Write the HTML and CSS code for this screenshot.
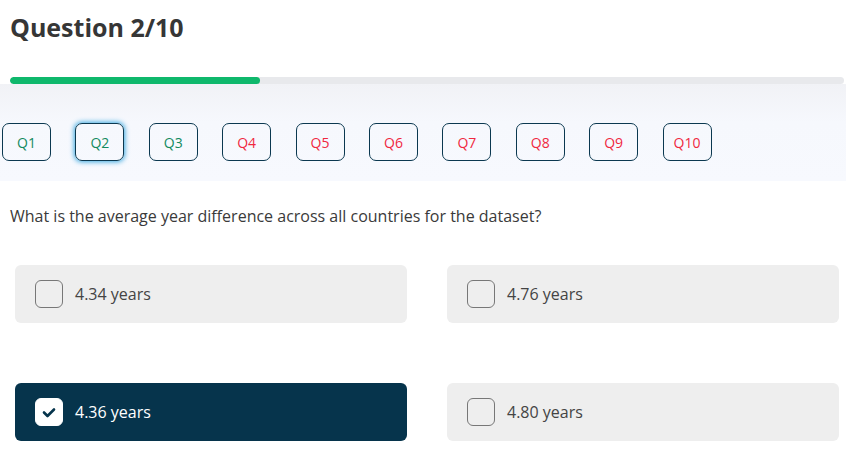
FILE: index.html
```html
<!DOCTYPE html>
<html lang="en">
<head>
<meta charset="utf-8">
<title>Quiz</title>
<link rel="stylesheet" href="styles.css">
</head>
<body>
<div class="page">
  <header class="head">
    <h1 class="title">Question 2/10</h1>
    <div class="progress"><div class="progress-fill" style="width: 250px"></div></div>
  </header>
  <nav class="qnav">
    <button class="qbtn done">Q1</button>
    <button class="qbtn done current">Q2</button>
    <button class="qbtn done">Q3</button>
    <button class="qbtn todo">Q4</button>
    <button class="qbtn todo">Q5</button>
    <button class="qbtn todo">Q6</button>
    <button class="qbtn todo">Q7</button>
    <button class="qbtn todo">Q8</button>
    <button class="qbtn todo">Q9</button>
    <button class="qbtn todo">Q10</button>
  </nav>
  <p class="question">What is the average year difference across all countries for the dataset?</p>
  <div class="options">
    <div class="option"><span class="box"></span><span class="label">4.34 years</span></div>
    <div class="option"><span class="box"></span><span class="label">4.76 years</span></div>
    <div class="option selected"><span class="box"><svg width="14" height="11" viewBox="0 0 14 11"><path d="M2 5.5 L5.5 9 L12 2.5" fill="none" stroke="#06344c" stroke-width="2.6" stroke-linecap="round" stroke-linejoin="round"/></svg></span><span class="label">4.36 years</span></div>
    <div class="option"><span class="box"></span><span class="label">4.80 years</span></div>
  </div>
</div>
</body>
</html>
```

FILE: styles.css
```css
* { box-sizing: border-box; }
html, body { margin: 0; padding: 0; background: #ffffff; }
body { font-family: "Open Sans", "Liberation Sans", sans-serif; color: #333; }

.head { padding: 10px 2px 0 10px; }
.title {
  margin: 0;
  font-size: 25px;
  line-height: 34px;
  font-weight: 700;
  color: #363636;
}
.progress {
  margin-top: 33px;
  height: 7px;
  background: #e8e9ec;
  border-radius: 4px;
  overflow: hidden;
}
.progress-fill {
  height: 100%;
  background: #0fb86c;
  border-radius: 4px;
}

.qnav {
  display: flex;
  gap: 24.4px;
  padding: 39px 0 20px 2px;
  background: linear-gradient(#f1f2f6, #f6f8fd 40%, #f7f9fe);
}
.qbtn {
  width: 49px;
  height: 38px;
  border: 1px solid #0b3850;
  border-radius: 7px;
  background: transparent;
  font-family: inherit;
  font-size: 14px;
  padding: 0;
}
.qbtn.done { color: #138a5e; }
.qbtn.todo { color: #f0283f; }
.qbtn.current { box-shadow: 0 0 5px 1px #3aa8e0; }

.question {
  margin: 0;
  padding: 24px 10px 0 10px;
  font-size: 16px;
  line-height: 22px;
  color: #3a3a3a;
}

.options {
  display: grid;
  grid-template-columns: 392px 392px;
  column-gap: 40px;
  row-gap: 60px;
  padding: 38px 0 0 15px;
}
.option {
  height: 58px;
  background: #eeeeee;
  border-radius: 6px;
  display: flex;
  align-items: center;
  padding-left: 20px;
  gap: 12px;
  color: #444;
  font-size: 16px;
}
.box {
  width: 28px;
  height: 28px;
  border: 1px solid #777;
  border-radius: 6px;
  display: flex;
  align-items: center;
  justify-content: center;
  flex: none;
}
.option.selected { background: #06344c; color: #ffffff; }
.option.selected .box { background: #ffffff; border-color: #ffffff; }
```
